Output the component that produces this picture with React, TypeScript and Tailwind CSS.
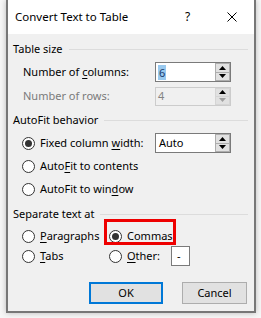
import type { ReactNode } from "react"

const font = { fontFamily: '"Noto Sans", "Open Sans", sans-serif' }

function GroupHeader({ label }: { label: string }) {
  return (
    <div className="flex h-[16px] items-center pl-[5px] pr-[6px]">
      <span>{label}</span>
      <div className="ml-[6px] h-px flex-1 bg-[#dcdcdc]" />
    </div>
  )
}

function Radio({ checked, children }: { checked?: boolean; children: ReactNode }) {
  return (
    <div className="flex items-center">
      <span className="flex h-[13px] w-[13px] shrink-0 items-center justify-center rounded-full border border-[#333] bg-white">
        {checked && <span className="h-[7px] w-[7px] rounded-full bg-[#333]" />}
      </span>
      <span className="ml-[5px] whitespace-nowrap">{children}</span>
    </div>
  )
}

function SpinButtons({ disabled }: { disabled?: boolean }) {
  return (
    <div className="flex w-[15px] flex-col bg-[#f0f0f0]">
      <div className={"flex flex-1 items-center justify-center border bg-[#e1e1e1] " + (disabled ? "border-[#d5d5d5]" : "border-[#adadad]")}>
        <svg width="7" height="4" viewBox="0 0 7 4">
          <path d="M3.5 0 L7 4 L0 4 Z" fill="#000" />
        </svg>
      </div>
      <div className={"flex flex-1 items-center justify-center border border-t-0 bg-[#e1e1e1] " + (disabled ? "border-[#d5d5d5]" : "border-[#adadad]")}>
        <svg width="7" height="4" viewBox="0 0 7 4">
          <path d="M0 0 L7 0 L3.5 4 Z" fill={disabled ? "#a0a0a0" : "#000"} />
        </svg>
      </div>
    </div>
  )
}

function SpinBox({ value, disabled, selected }: { value: string; disabled?: boolean; selected?: boolean }) {
  return (
    <div
      className={
        disabled
          ? "flex h-[19px] w-[76px] border border-[#cccccc] bg-[#f0f0f0]"
          : "flex h-[20px] w-[76px] border border-[#7a7a7a] bg-white"
      }
    >
      <div className="flex flex-1 items-center pl-[2px]">
        <span className={selected ? "bg-[#99c9ef] px-px leading-[15px] text-[#1a3c6e]" : disabled ? "text-[#838383]" : ""}>
          {value}
        </span>
      </div>
      <SpinButtons disabled={disabled} />
    </div>
  )
}

function U({ children }: { children: string }) {
  return <span className="underline underline-offset-2">{children}</span>
}

export default function App() {
  return (
    <div className="h-[318px] w-[261px] overflow-hidden bg-[#f7f7f7] text-[11px] text-black" style={font}>
      <div className="ml-[6px] flex h-[313px] w-[250px] flex-col border-x-2 border-b-2 border-[#777777] bg-[#f0f0f0] shadow-[0_0_6px_rgba(0,0,0,0.25)]">
        {/* title bar */}
        <div className="flex h-[34px] items-center bg-white pl-[7px]">
          <span className="flex-1 text-[11.5px]">Convert Text to Table</span>
          <span className="w-[14px] text-[12px]">?</span>
          <svg className="ml-[28px] mr-[17px]" width="10" height="10" viewBox="0 0 10 10">
            <path d="M0.5 0.5 L9.5 9.5 M9.5 0.5 L0.5 9.5" stroke="#000" strokeWidth="1" />
          </svg>
        </div>

        <div className="flex flex-col">
          <div className="mt-[7px]">
            <GroupHeader label="Table size" />
          </div>
          <div className="mt-[5px] flex h-[20px] items-center pl-[15px]">
            <span className="w-[132px]">
              Number of <U>c</U>olumns:
            </span>
            <SpinBox value="6" selected />
          </div>
          <div className="mt-[4px] flex h-[20px] items-center pl-[15px] text-[#7a7a7a]">
            <span className="w-[132px]">Number of rows:</span>
            <SpinBox value="4" disabled />
          </div>

          <div className="mt-[6px]">
            <GroupHeader label="AutoFit behavior" />
          </div>
          <div className="mt-[5px] flex h-[20px] items-center pl-[14px]">
            <div className="w-[133px]">
              <Radio checked>
                Fixed column <U>w</U>idth:
              </Radio>
            </div>
            <div className="flex h-[20px] w-[76px] border border-[#7a7a7a] bg-white">
              <div className="flex flex-1 items-center pl-[3px]">Auto</div>
              <SpinButtons />
            </div>
          </div>
          <div className="mt-[3px] flex h-[20px] items-center pl-[14px]">
            <Radio>
              Auto<U>F</U>it to contents
            </Radio>
          </div>
          <div className="mt-[3px] flex h-[20px] items-center pl-[14px]">
            <Radio>
              AutoFit to win<U>d</U>ow
            </Radio>
          </div>

          <div className="mt-[7px]">
            <GroupHeader label="Separate text at" />
          </div>
          <div className="mt-[4px] flex h-[20px] items-center pl-[14px]">
            <div className="w-[87px]">
              <Radio>
                <U>P</U>aragraphs
              </Radio>
            </div>
            <div className="relative">
              <Radio checked>
                Co<U>m</U>mas
              </Radio>
              <div className="absolute left-[-5px] top-[-9px] h-[26px] w-[72px] border-[3px] border-[#ee0000]" />
            </div>
          </div>
          <div className="flex h-[20px] items-center pl-[14px]">
            <div className="w-[87px]">
              <Radio>
                <U>T</U>abs
              </Radio>
            </div>
            <div className="w-[62px]">
              <Radio>
                <U>O</U>ther:
              </Radio>
            </div>
            <div className="flex h-[20px] w-[19px] items-center border border-[#7a7a7a] bg-white pl-[5px]">-</div>
          </div>

          <div className="mt-[16px] flex h-[22px] pl-[81px]">
            <div className="flex w-[74px] items-center justify-center border-2 border-[#0078d7] bg-[#e1e1e1]">OK</div>
            <div className="ml-[19px] flex w-[65px] items-center justify-center border border-[#adadad] bg-[#e1e1e1]">
              Cancel
            </div>
          </div>
        </div>
      </div>
    </div>
  )
}
